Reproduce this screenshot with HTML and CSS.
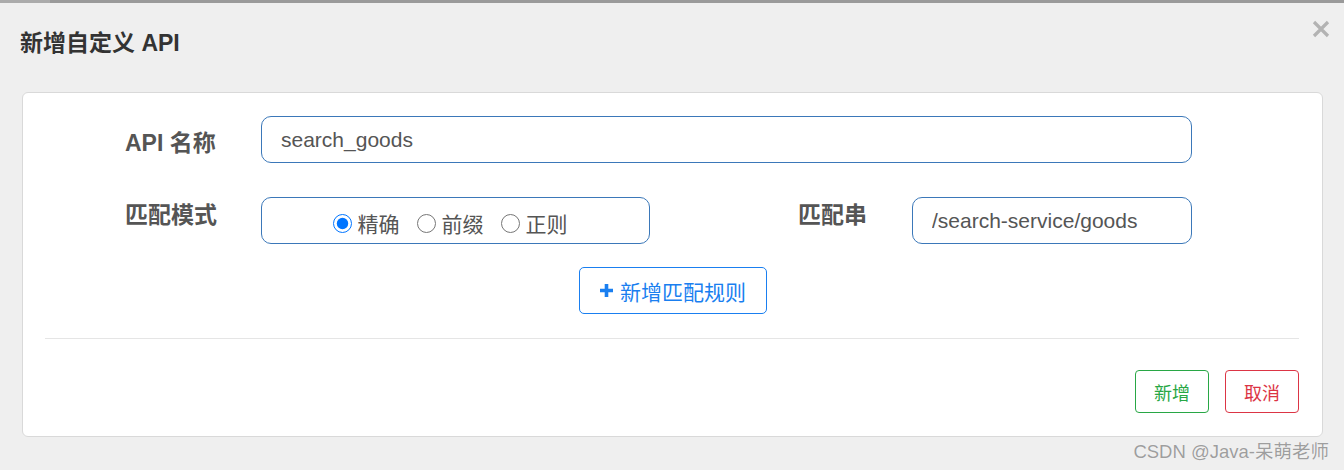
FILE: index.html
```html
<!DOCTYPE html>
<html lang="zh-CN">
  <head>
    <meta charset="UTF-8" />
    <meta name="viewport" content="width=device-width, initial-scale=1.0" />
    <title>新增自定义 API</title>
    <link rel="stylesheet" href="styles.css">
  </head>

  <body>
    <!-- backdrop strip -->
    <div class="topbar"><span class="topbar-left"></span></div>

    <div class="modal">
      <div class="modal-header">
        <h4 class="modal-title">新增自定义 API</h4>
        <button class="close" type="button">
          <svg width="18" height="18" viewBox="0 0 18 18">
            <path d="M2 2 L16 16 M16 2 L2 16" stroke="#b3b3b3" stroke-width="3.2" />
          </svg>
        </button>
      </div>

      <div class="modal-body">
        <form class="api-form">
          <div class="form-row">
            <label class="form-label label-name">API 名称</label>
            <input class="form-input input-name" type="text" value="search_goods" />
          </div>

          <div class="form-row">
            <label class="form-label label-mode">匹配模式</label>
            <div class="radio-box">
              <label class="radio"><input type="radio" name="mode" checked />精确</label>
              <label class="radio"><input type="radio" name="mode" />前缀</label>
              <label class="radio"><input type="radio" name="mode" />正则</label>
            </div>
            <label class="form-label label-mode label-pattern">匹配串</label>
            <input class="form-input input-pattern" type="text" value="/search-service/goods" />
          </div>

          <div class="add-row">
            <button class="btn-add-rule" type="button">
              <svg width="15" height="15" viewBox="0 0 15 15">
                <path d="M7.5 1 V14 M1 7.5 H14" stroke="#1a7ff0" stroke-width="3.6" />
              </svg>
              新增匹配规则
            </button>
          </div>
        </form>

        <div class="divider"></div>

        <div class="modal-footer">
          <button class="btn btn-ok" type="button">新增</button>
          <button class="btn btn-cancel" type="button">取消</button>
        </div>
      </div>
    </div>

    <div class="watermark">CSDN @Java-呆萌老师</div>
  </body>
</html>
```

FILE: styles.css
```css
body {
  margin: 0;
  padding: 0;
  height: 470px;
  overflow: hidden;
  position: relative;
  background-color: #efefef;
  font-family: "Liberation Sans", "Noto Sans CJK SC", sans-serif;
  color: #555;
}

.topbar {
  display: flex;
  height: 3px;
  background-color: #9a9a9a;
}

.topbar-left {
  width: 50px;
  background-color: #ababab;
}

.modal-header {
  position: relative;
  padding: 26px 20px 0 20px;
}

.modal-title {
  margin: 0;
  font-size: 23px;
  line-height: 28px;
  font-weight: bold;
  color: #333;
}

.close {
  position: absolute;
  top: 17px;
  right: 14px;
  padding: 0;
  border: none;
  background: none;
  cursor: pointer;
}

.modal-body {
  margin: 35px 21px 0 22px;
  padding: 23px 23px 23px 22px;
  background-color: #fff;
  border: 1px solid #d9d9d9;
  border-radius: 6px;
}

.form-row {
  display: flex;
  align-items: flex-start;
  padding-left: 80px;
  margin-bottom: 34px;
}

.form-label {
  width: 136px;
  flex-shrink: 0;
  font-size: 23px;
  line-height: 28px;
  font-weight: bold;
  color: #555;
}

.label-name {
  margin-top: 13px;
}

.label-mode {
  margin-top: 4px;
}

.label-pattern {
  width: 114px;
  margin-left: 148px;
}

.form-input {
  box-sizing: border-box;
  height: 47px;
  padding: 0 19px;
  border: 1px solid #3b78b9;
  border-radius: 10px;
  font-family: "Liberation Sans", sans-serif;
  font-size: 21px;
  color: #555;
  outline: none;
}

.input-name {
  width: 931px;
}

.input-pattern {
  width: 280px;
}

.radio-box {
  box-sizing: border-box;
  width: 389px;
  height: 47px;
  display: flex;
  justify-content: center;
  align-items: center;
  padding: 5px 11px 0 0;
  border: 1px solid #3b78b9;
  border-radius: 10px;
}

.radio {
  display: flex;
  align-items: center;
  margin-right: 17px;
  font-size: 21px;
  color: #555;
}

.radio:last-child {
  margin-right: 0;
}

.radio input {
  width: 19px;
  height: 19px;
  margin: 0 6px 0 0;
}

.add-row {
  display: flex;
  justify-content: center;
  margin-top: -11px;
  padding-left: 1px;
}

.btn-add-rule {
  box-sizing: border-box;
  width: 188px;
  height: 47px;
  display: flex;
  justify-content: center;
  align-items: center;
  gap: 6px;
  padding: 0;
  background-color: #fff;
  border: 1px solid #1a7ff0;
  border-radius: 5px;
  font-family: "Noto Sans CJK SC", sans-serif;
  font-size: 21px;
  color: #1a7ff0;
  cursor: pointer;
}

.divider {
  height: 1px;
  margin-top: 24px;
  background-color: #e5e5e5;
}

.modal-footer {
  display: flex;
  justify-content: flex-end;
  gap: 16px;
  margin-top: 31px;
}

.btn {
  box-sizing: border-box;
  width: 74px;
  height: 43px;
  padding: 0;
  background-color: #fff;
  border-radius: 4px;
  font-family: "Noto Sans CJK SC", sans-serif;
  font-size: 18px;
  cursor: pointer;
}

.btn-ok {
  border: 1px solid #28a745;
  color: #28a745;
}

.btn-cancel {
  border: 1px solid #dc3545;
  color: #dc3545;
}

.watermark {
  position: absolute;
  right: 15px;
  bottom: 7px;
  font-size: 18.5px;
  color: #9e9e9e;
  text-shadow: 0 0 1px #fff;
}
```
